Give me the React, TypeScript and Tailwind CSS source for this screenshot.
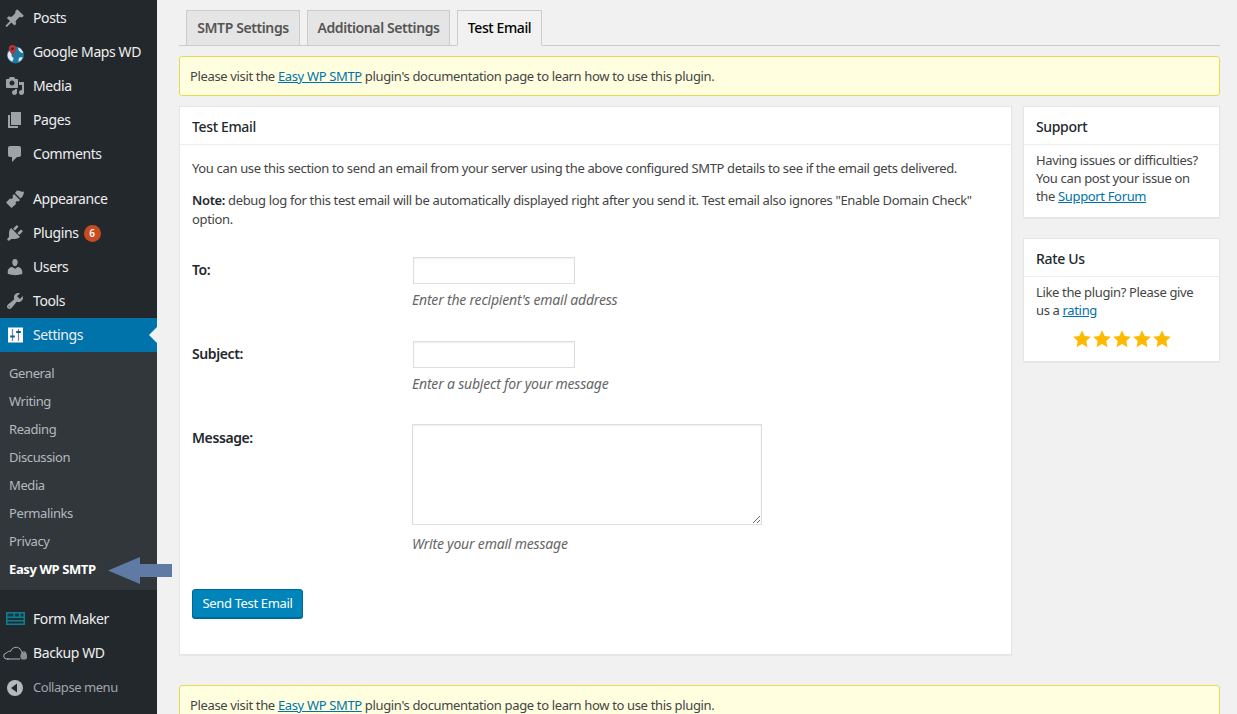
import React from "react";

const Dash = ({ d, size = 20 }: { d: string; size?: number }) => (
  <svg width={size} height={size} viewBox="0 0 20 20" className="shrink-0" fill="#9ea3a8" fillRule="evenodd">
    <path d={d} />
  </svg>
);

const P = {
  posts:
    "M10.44 3.02l1.82-1.82 6.55 6.55-1.82 1.82c-1.05-.68-2.14-.77-3.03-.06l-2.89 2.89c-.78 1.02-.45 2.29.24 3.34l-1.82 1.82-3.13-3.13-4.29 4.29-1.34.01.01-1.34 4.29-4.29-3.13-3.13 1.82-1.82c1.05.68 2.32 1.02 3.34.24l2.89-2.89c.71-.89.62-1.98-.06-3.03z",
  media:
    "M13 11V4c0-.55-.45-1-1-1h-1.67L9 1H5L3.67 3H2c-.55 0-1 .45-1 1v7c0 .55.45 1 1 1h10c.55 0 1-.45 1-1zM7 4.5c1.38 0 2.5 1.12 2.5 2.5S8.38 9.5 7 9.5 4.5 8.38 4.5 7 5.62 4.5 7 4.5zM14 6h5v10.5c0 1.38-1.12 2.5-2.5 2.5S14 17.88 14 16.5s1.12-2.5 2.5-2.5c.17 0 .34.02.5.05V9h-3V6zm-4 8.05V13h2v3.5c0 1.38-1.12 2.5-2.5 2.5S7 17.88 7 16.5 8.12 14 9.5 14c.17 0 .34.02.5.05z",
  pages: "M6 15V2h10v13H6zm-1 1h8v2H3V5h2v11z",
  comments: "M5 2h9c1.1 0 2 .9 2 2v7c0 1.1-.9 2-2 2h-2l-5 5v-5H5c-1.1 0-2-.9-2-2V4c0-1.1.9-2 2-2z",
  appearance:
    "M12 1.500l3 .5c1 .8 2.500 1 4 .5-.2 2-.6 3.500-1.500 5L15.500 9.500 10 4zM9 5l6 6-1.500 1.500-1.500-.5-1.500 1.500.5 1.500L6.500 19 1 13.500 5 9.500l1.500.5L8 8.500 7.500 7z",
  plugins:
    "M13.11 4.36L9.87 7.6 8 5.73l3.24-3.24c.35-.34 1.05-.2 1.56.32.52.51.66 1.21.31 1.55zm-8 1.77l.91-1.12 9.01 9.01-1.19.84c-.71.71-2.63 1.16-3.82 1.16H6.14L4.9 17.26c-.59.59-1.54.59-2.12 0-.59-.58-.59-1.53 0-2.12l1.24-1.24v-3.88c0-1.13.4-3.19 1.09-3.89zm7.26 3.97l3.24-3.24c.34-.35 1.04-.21 1.55.31.52.51.66 1.21.31 1.55l-3.24 3.25z",
  users:
    "M10 9.25c-2.27 0-2.73-3.44-2.73-3.44C7 4.02 7.82 2 9.97 2c2.16 0 2.98 2.02 2.71 3.81 0 0-.41 3.44-2.68 3.44zm0 2.57L12.72 10c2.39 0 4.52 2.33 4.52 4.53v2.49s-3.65 1.13-7.24 1.13c-3.65 0-7.24-1.13-7.24-1.13v-2.49c0-2.25 1.94-4.48 4.47-4.48z",
  tools:
    "M16.68 9.77c-1.34 1.34-3.3 1.67-4.95.99l-5.41 6.52c-.99.99-2.59.99-3.57 0-.99-.98-.99-2.58 0-3.57l6.52-5.42c-.68-1.65-.35-3.61.99-4.95 1.28-1.28 3.12-1.62 4.72-1.06l-2.89 2.89 2.82 2.82 2.86-2.87c.53 1.58.18 3.4-1.09 4.67zM4.66 15.37c-.22-.22-.58-.22-.8 0s-.22.58 0 .8.58.22.8 0 .22-.58 0-.8z",
};

const MapsIcon = () => (
  <svg width="20" height="20" viewBox="0 0 20 20" className="shrink-0 overflow-visible">
    <circle cx="10.500" cy="13" r="8.500" fill="#1f7aa3" />
    <path d="M4.500 9c1.500 0 3 .5 3.500 1.500S6.500 12 6.500 13.500s2 1.500 2 3-1 3-1.500 3c-2.500-1-4.500-3.500-4.500-6.500 0-1.500 1-3 2-4zM13.500 5.500c2.200.8 4 3 4.700 5.500-1.500.3-2.500-.5-3.500-1.500s-2-2.500-1.200-4zM14.500 15.500c1.200-.4 2.500-.4 3.200 0-.6 2-2 3.500-4 4.300-.5-1.500-.3-3.200.8-4.300z" fill="#dfe9ee" />
    <path d="M7.500 3a3.700 3.700 0 0 1 3.700 3.700c0 2.300-3.700 6.300-3.700 6.300S3.800 9 3.800 6.700A3.700 3.700 0 0 1 7.500 3z" fill="#b5353a" />
    <circle cx="7.500" cy="6.700" r="1.300" fill="#23282d" />
  </svg>
);

const SettingsIcon = () => (
  <svg width="20" height="20" viewBox="0 0 20 20" className="shrink-0">
    <rect x="3" y="2.500" width="15" height="15" fill="#ffffff" />
    <path d="M7.500 4v12M13.500 4v12" stroke="#7f78c8" strokeWidth="1.200" />
    <path d="M5.200 11.500h4.600M11.200 7h4.600" stroke="#0b5f8a" strokeWidth="2" />
  </svg>
);

const FormMakerIcon = () => (
  <svg width="20" height="14" viewBox="0 0 20 14" className="shrink-0 ml-px">
    <rect x="0" y="0" width="19" height="13" fill="#0f7f8f" />
    <path d="M1.500 1.500h6v3h-6zM9 1.500h4v3H9zM14.500 1.500h3v3h-3z" fill="#1c3a46" />
    <path d="M1.500 6h16v2h-16zM1.500 9.500h16v2h-16z" fill="#1c2e3a" />
  </svg>
);

const CloudIcon = () => (
  <svg width="25" height="14" viewBox="0 0 25 14" className="shrink-0 -ml-[2px]" fill="none" stroke="#aab0b5" strokeWidth="1">
    <path d="M6 13H4A3 3 0 0 1 3.500 7C4.500 5.500 6 5 7.500 5.500 9 1 14.500 0 17 3c1.200 1.300 1.500 2.500 1.500 3.500" />
    <path d="M4 13h13" />
    <rect x="18" y="7.500" width="5.500" height="5.500" rx="1" fill="#8a8f94" stroke="#8a8f94" />
    <path d="M19.300 7.500V6h3v1.500" />
  </svg>
);

const CollapseIcon = () => (
  <svg width="20" height="20" viewBox="0 0 20 20" className="shrink-0">
    <circle cx="10" cy="10" r="8" fill="#b4b9be" />
    <path d="M12 5.500v9L6 10z" fill="#23282d" />
  </svg>
);

const MenuItem = ({
  label,
  icon,
  active = false,
  children,
}: {
  label: string;
  icon: React.ReactNode;
  active?: boolean;
  children?: React.ReactNode;
}) => (
  <div className={`relative h-[34px] flex items-center ${active ? "bg-[#0073aa]" : ""}`}>
    <div className="w-[33px] pl-[5px] flex items-center shrink-0">{icon}</div>
    <span className="text-[14px] text-[#eeeeee] pb-[2px] tracking-[-0.4px]">{label}</span>
    {children}
    {active && (
      <span className="absolute right-0 top-[9px] w-0 h-0 border-y-[8px] border-y-transparent border-r-[8px] border-r-[#f1f1f1]" />
    )}
  </div>
);

const SubItem = ({ label, strong = false }: { label: string; strong?: boolean }) => (
  <div className={`h-[28px] flex items-center pl-[9px] text-[13px] tracking-[-0.4px] ${strong ? "text-white font-bold" : "text-[#b4b9be]"}`}>
    {label}
  </div>
);

const Sidebar = () => (
  <aside className="relative w-[157px] shrink-0 bg-[#23282d] h-[714px] overflow-hidden pt-px">
    <MenuItem label="Posts" icon={<Dash d={P.posts} />} />
    <MenuItem label="Google Maps WD" icon={<MapsIcon />} />
    <MenuItem label="Media" icon={<Dash d={P.media} />} />
    <MenuItem label="Pages" icon={<Dash d={P.pages} />} />
    <MenuItem label="Comments" icon={<Dash d={P.comments} />} />
    <div className="h-[11px]" />
    <MenuItem label="Appearance" icon={<Dash d={P.appearance} />} />
    <MenuItem label="Plugins" icon={<Dash d={P.plugins} />}>
      <span className="ml-[5px] w-[17px] h-[17px] rounded-full bg-[#ca4a1f] text-white text-[10px] font-semibold flex items-center justify-center">6</span>
    </MenuItem>
    <MenuItem label="Users" icon={<Dash d={P.users} />} />
    <MenuItem label="Tools" icon={<Dash d={P.tools} />} />
    <MenuItem label="Settings" icon={<SettingsIcon />} active />
    <div className="bg-[#32373c] h-[238px] pt-[8px]">
      <SubItem label="General" />
      <SubItem label="Writing" />
      <SubItem label="Reading" />
      <SubItem label="Discussion" />
      <SubItem label="Media" />
      <SubItem label="Permalinks" />
      <SubItem label="Privacy" />
      <SubItem label="Easy WP SMTP" strong />
    </div>
    <div className="h-[12px]" />
    <MenuItem label="Form Maker" icon={<FormMakerIcon />} />
    <MenuItem label="Backup WD" icon={<CloudIcon />} />
    <div className="h-[34px] pt-[2px] flex items-center">
      <div className="w-[33px] pl-[5px] shrink-0"><CollapseIcon /></div>
      <span className="text-[13px] text-[#a0a5aa] tracking-[-0.45px]">Collapse menu</span>
    </div>
  </aside>
);

const Tab = ({ label, width, active = false }: { label: string; width: string; active?: boolean }) => (
  <div
    className={`${width} h-[36px] -mb-px pb-[2px] flex items-center justify-center border border-[#cccccc] text-[14px] tracking-[-0.4px] ${
      active ? "bg-[#f1f1f1] border-b-[#f1f1f1] text-[#000000] font-medium" : "bg-[#e5e5e5] text-[#555555] font-semibold"
    }`}
  >
    {label}
  </div>
);

const Link = ({ children }: { children: React.ReactNode }) => (
  <a className="text-[#0073aa] underline">{children}</a>
);

const Notice = () => (
  <div className="h-[40px] bg-[#ffffe0] border border-[#e6db55] rounded-[3px] flex items-center px-[10px] pt-[2px] text-[13px] text-[#444444]">
    <span>
      Please visit the <Link>Easy WP SMTP</Link> plugin's documentation page to learn how to use this plugin.
    </span>
  </div>
);

const Field = ({
  label,
  hint,
  children,
  rowClass,
  labelClass,
}: {
  label: string;
  hint: string;
  children: React.ReactNode;
  rowClass: string;
  labelClass: string;
}) => (
  <div className={`flex ${rowClass}`}>
    <div className={`w-[220px] shrink-0 text-[14px] font-semibold tracking-[-0.4px] text-[#23282d] leading-[20px] ${labelClass}`}>{label}</div>
    <div>
      {children}
      <div className="mt-[6px] text-[14px] italic text-[#666666] leading-[20px] tracking-[-0.2px]">{hint}</div>
    </div>
  </div>
);

const TextInput = () => (
  <div className="w-[162px] h-[27px] ml-px bg-white border border-[#dddddd] shadow-[inset_0_1px_2px_rgba(0,0,0,0.07)]" />
);

const Card = ({ title, children, className = "" }: { title: string; children: React.ReactNode; className?: string }) => (
  <section className={`bg-white border border-[#e5e5e5] shadow-[0_1px_1px_rgba(0,0,0,0.04)] ${className}`}>
    <h2 className="h-[38px] flex items-center px-[12px] pt-[2px] border-b border-[#eeeeee] text-[14px] font-medium text-[#23282d]">
      {title}
    </h2>
    {children}
  </section>
);

const Star = () => (
  <svg width="20" height="20" viewBox="0 0 24 24" fill="#ffb900">
    <path d="M12 1.500l3.200 6.900 7.500.9-5.600 5.100 1.500 7.400-6.600-3.700-6.600 3.700 1.500-7.400L1.300 9.300l7.500-.9z" />
  </svg>
);

export default function App() {
  return (
    <div className="relative flex h-[714px] w-[1237px] overflow-hidden bg-[#f1f1f1] font-['Noto_Sans','Open_Sans',sans-serif] tracking-[-0.35px]">
      <Sidebar />
      <svg width="64" height="27" viewBox="0 0 64 27" className="absolute left-[108px] top-[557px]">
        <path d="M0 13.500L32 0v7h32v13H32v7z" fill="#5f7ba5" />
      </svg>
      <main className="w-[1080px] shrink-0 pl-[22px] pr-[17px] pt-[10px] flex flex-col">
        <nav className="flex gap-[7px] border-b border-[#cccccc] pl-[7px] h-[36px]">
          <Tab label="SMTP Settings" width="w-[114px]" />
          <Tab label="Additional Settings" width="w-[143px]" />
          <Tab label="Test Email" width="w-[85px]" active />
        </nav>
        <div className="mt-[10px]">
          <Notice />
        </div>
        <div className="mt-[10px] flex gap-[11px] items-start">
          <Card title="Test Email" className="w-[833px] h-[549px]">
            <div className="px-[12px] pt-[14px] text-[13px] text-[#444444] leading-[19px]">
              <p>You can use this section to send an email from your server using the above configured SMTP details to see if the email gets delivered.</p>
              <p className="mt-[13px]">
                <b className="font-semibold text-[#23282d]">Note:</b> debug log for this test email will be automatically displayed right after you send it. Test email also ignores "Enable Domain Check" option.
              </p>
              <div className="mt-[28px]">
                <Field label="To:" hint="Enter the recipient's email address" rowClass="mb-[31px]" labelClass="pt-[3px]">
                  <TextInput />
                </Field>
                <Field label="Subject:" hint="Enter a subject for your message" rowClass="mb-[30px]" labelClass="pt-[3px]">
                  <TextInput />
                </Field>
                <Field label="Message:" hint="Write your email message" rowClass="mb-[35px]" labelClass="pt-[4px]">
                  <textarea readOnly className="block w-[350px] h-[101px] mb-[9px] bg-white border border-[#dddddd] shadow-[inset_0_1px_2px_rgba(0,0,0,0.07)] outline-none" />
                </Field>
              </div>
              <button className="h-[29px] w-[111px] rounded-[3px] bg-[#0085ba] border border-[#006799] shadow-[0_1px_0_#006799] text-white text-[13px]">
                Send Test Email
              </button>
            </div>
          </Card>
          <div className="w-[197px] shrink-0 flex flex-col gap-[20px]">
            <Card title="Support" className="h-[112px]">
              <p className="px-[12px] pt-[6px] text-[13px] leading-[18px] text-[#444444]">
                Having issues or difficulties? You can post your issue on the <Link>Support Forum</Link>
              </p>
            </Card>
            <Card title="Rate Us" className="h-[124px]">
              <p className="px-[12px] pt-[6px] text-[13px] leading-[18px] text-[#444444]">
                Like the plugin? Please give us a <Link>rating</Link>
              </p>
              <div className="flex justify-center mt-[10px]">
                <Star /><Star /><Star /><Star /><Star />
              </div>
            </Card>
          </div>
        </div>
        <div className="mt-[30px]">
          <Notice />
        </div>
      </main>
    </div>
  );
}
